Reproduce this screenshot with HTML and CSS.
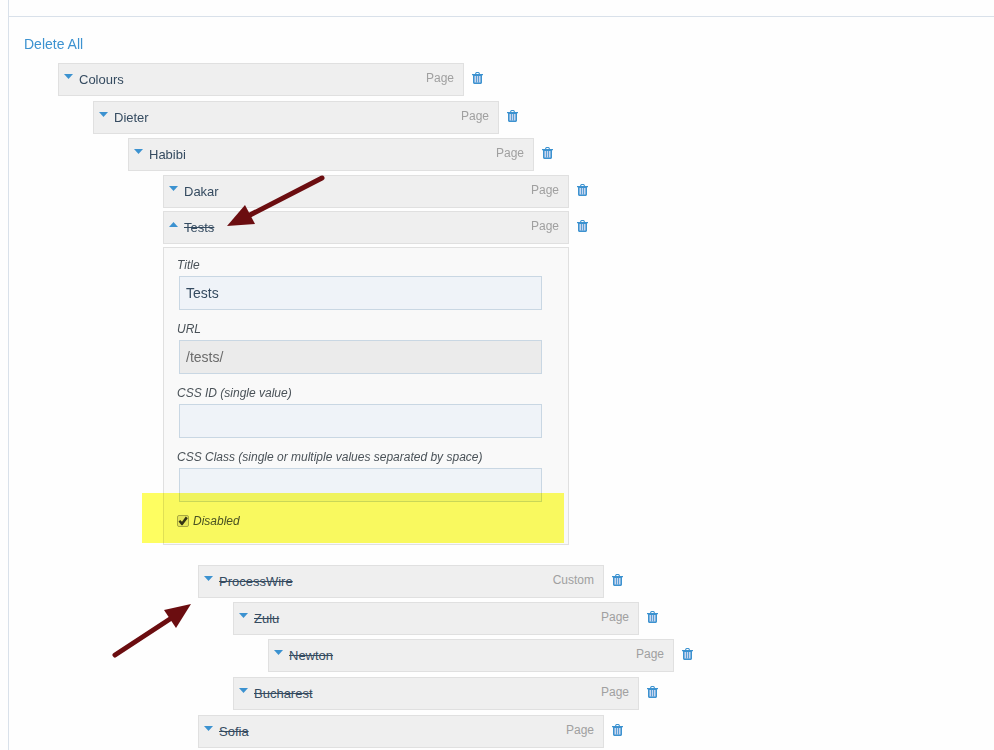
FILE: index.html
```html
<!DOCTYPE html>
<html lang="en">
<head>
    <meta charset="UTF-8">
    <title>Menu Builder</title>
    <meta name="viewport" content="width=device-width,initial-scale=1.0">
    <link rel="stylesheet" href="styles.css">
</head>
<body>
    <svg class="sprite" aria-hidden="true">
        <symbol id="trash" viewBox="0 0 11 12">
            <path fill-rule="evenodd" d="M3 2L3.600 .6Q3.900 0 4.500 0H6.500Q7.100 0 7.400 .6L8 2H11V3.200H10V10.600Q10 12 8.800 12H2.200Q1 12 1 10.600V3.200H0V2ZM4.200 2H6.800L6.500 1.100H4.500Z"/>
            <path class="slots" d="M2.500 4H8.500V10.500H2.500Z"/>
            <path d="M4 4H4.800V10.500H4ZM6.200 4H7V10.500H6.200Z"/>
        </symbol>
    </svg>
    <main class="page">
        <div class="page-head"></div>
        <div class="content">
            <a class="delete-all" href="#">Delete All</a>
            <ol class="menu">
                <li>
                    <div class="row">
                        <div class="item"><button class="caret" type="button" aria-label="Edit Colours"></button><span class="title">Colours</span><span class="type">Page</span></div>
                        <button class="remove" type="button" aria-label="Delete Colours"><svg><use href="#trash"/></svg></button>
                    </div>
                    <ol>
                        <li>
                            <div class="row">
                                <div class="item"><button class="caret" type="button" aria-label="Edit Dieter"></button><span class="title">Dieter</span><span class="type">Page</span></div>
                                <button class="remove" type="button" aria-label="Delete Dieter"><svg><use href="#trash"/></svg></button>
                            </div>
                            <ol>
                                <li>
                                    <div class="row">
                                        <div class="item"><button class="caret" type="button" aria-label="Edit Habibi"></button><span class="title">Habibi</span><span class="type">Page</span></div>
                                        <button class="remove" type="button" aria-label="Delete Habibi"><svg><use href="#trash"/></svg></button>
                                    </div>
                                    <ol>
                                        <li>
                                            <div class="row">
                                                <div class="item"><button class="caret" type="button" aria-label="Edit Dakar"></button><span class="title">Dakar</span><span class="type">Page</span></div>
                                                <button class="remove" type="button" aria-label="Delete Dakar"><svg><use href="#trash"/></svg></button>
                                            </div>
                                        </li>
                                        <li class="open disabled">
                                            <div class="row">
                                                <div class="item"><button class="caret" type="button" aria-label="Close Tests"></button><span class="title">Tests</span><span class="type">Page</span></div>
                                                <button class="remove" type="button" aria-label="Delete Tests"><svg><use href="#trash"/></svg></button>
                                                <svg class="arrow arrow-title" viewBox="0 0 100 56" aria-hidden="true">
                                                    <path class="shaft" d="M96 5L24 42"/>
                                                    <path class="head" d="M1 53L19 32L29 51Z"/>
                                                </svg>
                                            </div>
                                            <form class="settings">
                                                <div class="field">
                                                    <label for="title">Title</label>
                                                    <input id="title" type="text" value="Tests">
                                                </div>
                                                <div class="field">
                                                    <label for="url">URL</label>
                                                    <input id="url" type="text" value="/tests/" readonly>
                                                </div>
                                                <div class="field">
                                                    <label for="cssid">CSS ID (single value)</label>
                                                    <input id="cssid" type="text">
                                                </div>
                                                <div class="field">
                                                    <label for="cssclass">CSS Class (single or multiple values separated by space)</label>
                                                    <input id="cssclass" type="text">
                                                </div>
                                                <div class="check">
                                                    <input id="disabled" type="checkbox" checked>
                                                    <label for="disabled">Disabled</label>
                                                </div>
                                                <div class="highlight"></div>
                                            </form>
                                            <ol>
                                                <li class="disabled">
                                                    <div class="row">
                                                        <div class="item"><button class="caret" type="button" aria-label="Edit ProcessWire"></button><span class="title">ProcessWire</span><span class="type">Custom</span></div>
                                                        <button class="remove" type="button" aria-label="Delete ProcessWire"><svg><use href="#trash"/></svg></button>
                                                        <svg class="arrow arrow-child" viewBox="0 0 82 58" aria-hidden="true">
                                                            <path class="shaft" d="M5 53L60 17"/>
                                                            <path class="head" d="M81 2L54 8L66 26Z"/>
                                                        </svg>
                                                    </div>
                                                    <ol>
                                                        <li class="disabled">
                                                            <div class="row">
                                                                <div class="item"><button class="caret" type="button" aria-label="Edit Zulu"></button><span class="title">Zulu</span><span class="type">Page</span></div>
                                                                <button class="remove" type="button" aria-label="Delete Zulu"><svg><use href="#trash"/></svg></button>
                                                            </div>
                                                            <ol>
                                                                <li class="disabled">
                                                                    <div class="row">
                                                                        <div class="item"><button class="caret" type="button" aria-label="Edit Newton"></button><span class="title">Newton</span><span class="type">Page</span></div>
                                                                        <button class="remove" type="button" aria-label="Delete Newton"><svg><use href="#trash"/></svg></button>
                                                                    </div>
                                                                </li>
                                                            </ol>
                                                        </li>
                                                        <li class="disabled">
                                                            <div class="row">
                                                                <div class="item"><button class="caret" type="button" aria-label="Edit Bucharest"></button><span class="title">Bucharest</span><span class="type">Page</span></div>
                                                                <button class="remove" type="button" aria-label="Delete Bucharest"><svg><use href="#trash"/></svg></button>
                                                            </div>
                                                        </li>
                                                    </ol>
                                                </li>
                                                <li class="disabled">
                                                    <div class="row">
                                                        <div class="item"><button class="caret" type="button" aria-label="Edit Sofia"></button><span class="title">Sofia</span><span class="type">Page</span></div>
                                                        <button class="remove" type="button" aria-label="Delete Sofia"><svg><use href="#trash"/></svg></button>
                                                    </div>
                                                </li>
                                            </ol>
                                        </li>
                                    </ol>
                                </li>
                            </ol>
                        </li>
                    </ol>
                </li>
            </ol>
        </div>
    </main>
</body>
</html>
```
FILE: styles.css
```css
*{
    box-sizing: border-box;
}
body{
    margin: 0;
    background: #fefefe;
    color: #354b60;
    font-family: "Liberation Sans", Arial, sans-serif;
    font-size: 13px;
}
button{
    padding: 0;
    border: 0;
    background: none;
    cursor: pointer;
}
.sprite{
    display: none;
}
.page{
    min-height: 100vh;
    margin-left: 8px;
    border-left: 1px solid #d9e1ea;
}
.page-head{
    height: 17px;
    border-bottom: 1px solid #d9e1ea;
}
.content{
    padding: 18px 15px 0 15px;
}
.delete-all{
    display: inline-block;
    color: #3c92d0;
    font-size: 14px;
    line-height: 18px;
    text-decoration: none;
}

/* menu tree */
ol{
    margin: 4px 0 0 0;
    padding: 0 0 0 35px;
    list-style: none;
}
ol.menu{
    margin-top: 10px;
    padding-left: 34px;
}
ol.menu > li > ol{
    margin-top: 5px;
}
li + li{
    margin-top: 5px;
}
li + li.open{
    margin-top: 3px;
}
.row{
    position: relative;
    display: flex;
    gap: 8px;
}
.item{
    display: flex;
    width: 406px;
    height: 33px;
    padding: 0 9px 0 5px;
    border: 1px solid #e0e0e0;
    background: #efefef;
}
.caret{
    width: 9px;
    height: 5px;
    margin: 10px 6px 0 0;
    background: #3c92d0;
    clip-path: polygon(0 0, 100% 0, 50% 100%);
}
.open > .row .caret{
    clip-path: polygon(0 100%, 100% 100%, 50% 0);
}
.title{
    flex: 1;
    line-height: 32px;
}
.disabled > .row .title{
    text-decoration: line-through;
}
.type{
    color: #a0a0a0;
    font-size: 12px;
    line-height: 28px;
}
.remove{
    width: 11px;
    height: 12px;
    margin-top: 9px;
    color: #3c92d0;
}
.remove svg{
    display: block;
    width: 11px;
    height: 12px;
    fill: currentColor;
}
.slots{
    fill: #c9d6ef;
}

/* item settings */
.settings{
    position: relative;
    width: 406px;
    margin: 3px 0 20px 0;
    padding: 9px 26px 15px 13px;
    border: 1px solid #e0e0e0;
    background: #f9f9f9;
    font-size: 12px;
    font-style: italic;
    line-height: 16px;
    color: #4a5258;
}
.field{
    display: flex;
    flex-direction: column;
    gap: 3px;
    margin-bottom: 11px;
}
.field input{
    height: 34px;
    margin: 0 0 0 2px;
    padding: 0 6px;
    border: 1px solid #c9d7e3;
    border-radius: 0;
    background: #eff3f8;
    color: #354b60;
    font-family: inherit;
    font-size: 14px;
}
.field input[readonly]{
    background: #ebebeb;
    color: #6b6b6b;
}
.check{
    display: flex;
    align-items: center;
    gap: 4px;
}
.check input{
    appearance: none;
    width: 12px;
    height: 12px;
    margin: 0;
    border: 1px solid #a8a8a8;
    border-radius: 2px;
    background: #e6e6e6;
}
.check input:checked::before{
    content: "";
    display: block;
    height: 10px;
    background: #333;
    clip-path: polygon(5% 55%, 22% 40%, 40% 58%, 78% 5%, 98% 22%, 45% 92%, 35% 92%);
}

/* annotations */
.highlight{
    position: absolute;
    left: -22px;
    right: 4px;
    bottom: 1px;
    height: 50px;
    background: #ffff61;
    mix-blend-mode: multiply;
    pointer-events: none;
}
.arrow{
    position: absolute;
    pointer-events: none;
}
.arrow-title{
    top: -38px;
    left: 63px;
    width: 100px;
    height: 56px;
}
.arrow-child{
    top: 37px;
    left: -88px;
    width: 82px;
    height: 58px;
}
.shaft{
    stroke: #6b0d10;
    stroke-width: 5;
    stroke-linecap: round;
}
.head{
    fill: #6b0d10;
}
```
